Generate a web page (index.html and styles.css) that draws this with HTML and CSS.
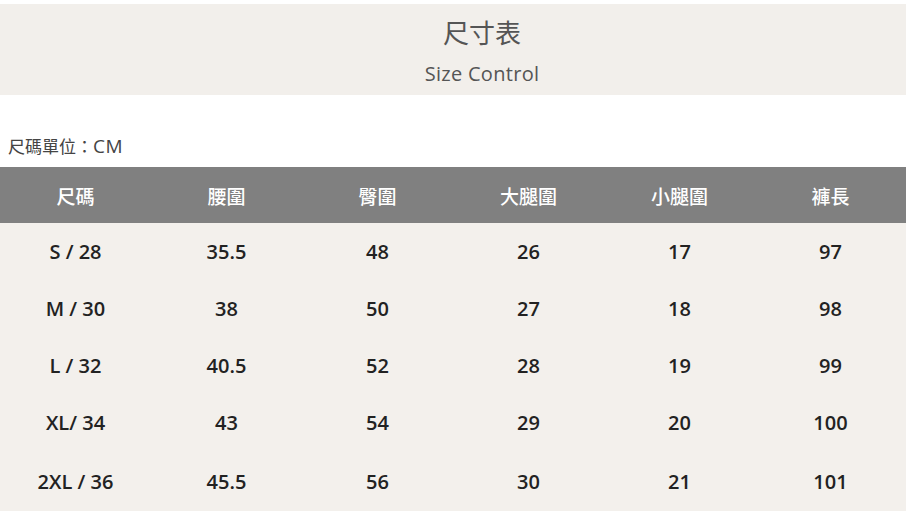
FILE: index.html
```html
<!DOCTYPE html>
<html lang="zh-Hant">
<head>
<meta charset="utf-8">
<link rel="stylesheet" href="styles.css">
</head>
<body>
<div class="page">
  <header class="banner">
    <h1 class="title">尺寸表</h1>
    <p class="subtitle">Size Control</p>
  </header>
  <p class="unit">尺碼單位：<span class="unit-cm">CM</span></p>
  <table class="chart">
    <thead>
      <tr><th>尺碼</th><th>腰圍</th><th>臀圍</th><th>大腿圍</th><th>小腿圍</th><th>褲長</th></tr>
    </thead>
    <tbody>
      <tr><td>S / 28</td><td>35.5</td><td>48</td><td>26</td><td>17</td><td>97</td></tr>
      <tr><td>M / 30</td><td>38</td><td>50</td><td>27</td><td>18</td><td>98</td></tr>
      <tr><td>L / 32</td><td>40.5</td><td>52</td><td>28</td><td>19</td><td>99</td></tr>
      <tr><td>XL/ 34</td><td>43</td><td>54</td><td>29</td><td>20</td><td>100</td></tr>
      <tr><td>2XL / 36</td><td>45.5</td><td>56</td><td>30</td><td>21</td><td>101</td></tr>
    </tbody>
  </table>
</div>
</body>
</html>
```
FILE: styles.css
```css
html, body {
  margin: 0;
  padding: 0;
  background: #ffffff;
}
body {
  font-family: "Open Sans", "Noto Sans CJK TC", sans-serif;
}
.page {
  width: 906px;
  padding-top: 4px;
}
.banner {
  background: #f2efeb;
  height: 91px;
  display: flex;
  flex-direction: column;
  align-items: center;
  box-sizing: border-box;
  padding-top: 11px;
}
.title {
  margin: 0;
  font-family: "Noto Sans CJK TC", sans-serif;
  font-weight: 400;
  font-size: 26px;
  line-height: 34px;
  color: #555555;
  padding-left: 58px;
}
.subtitle {
  margin: 12px 0 0 0;
  font-size: 20px;
  line-height: 26px;
  letter-spacing: 0.3px;
  color: #555555;
  padding-left: 58px;
}
.unit {
  margin: 0;
  padding: 40px 0 0 8px;
  height: 32px;
  font-family: "Open Sans", "Noto Sans CJK TC", sans-serif;
  font-size: 17px;
  line-height: 22px;
  color: #444444;
}
.unit-cm {
  font-size: 19px;
  letter-spacing: 0.5px;
}
.chart {
  width: 906px;
  border-collapse: collapse;
  table-layout: fixed;
  background: #f3f0ec;
}
.chart th {
  background: #808080;
  color: #ffffff;
  font-family: "Noto Sans CJK TC", sans-serif;
  font-weight: 500;
  font-size: 19px;
  height: 56px;
  padding: 0;
  text-align: center;
}
.chart td {
  height: 57px;
  padding: 0;
  text-align: center;
  font-weight: 600;
  font-size: 20px;
  color: #222222;
}
.chart tbody tr:last-child td {
  height: 60px;
}
```
